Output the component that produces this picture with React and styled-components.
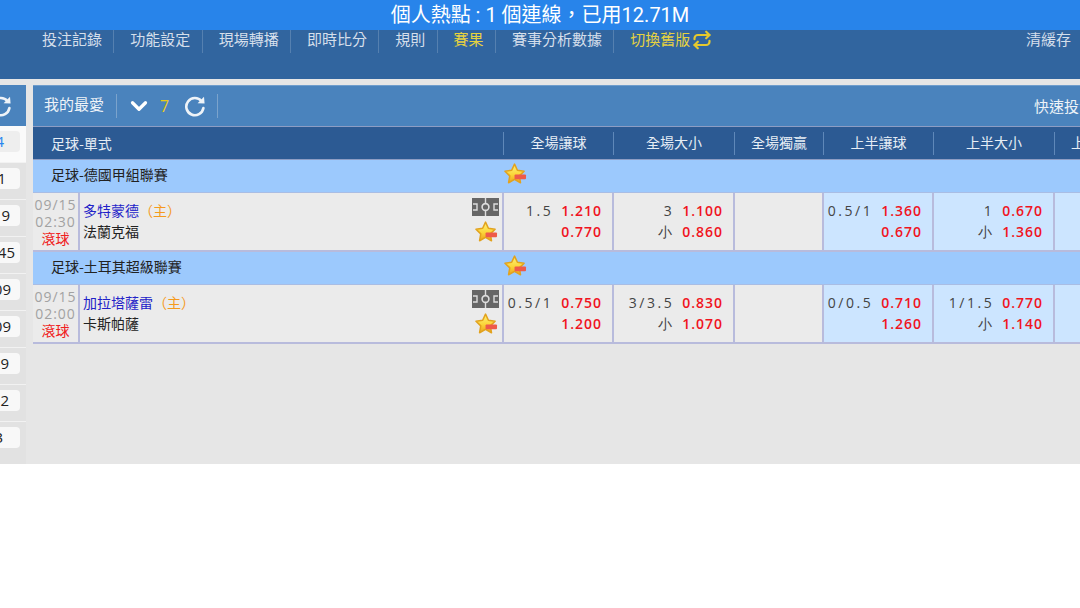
import React from "react"
import styled, { createGlobalStyle } from "styled-components"
import { ChevronDown, Repeat } from "lucide-react"

const GlobalStyle = createGlobalStyle`
  body {
    margin: 0;
    background: #fff;
    font-family: "Noto Sans CJK TC", "Noto Sans", sans-serif;
  }
`

const COLUMNS = "46px 424px 110px 121px 89px 110px 121px 89px"

const Page = styled.div`
  width: 1080px;
  height: 464px;
  overflow: hidden;
  background: #e6e6e6;
`

const HotspotBar = styled.div`
  height: 30px;
  background: #2884ea;
  color: #fff;
  font-family: Roboto, "Noto Sans CJK TC", sans-serif;
  font-size: 20px;
  line-height: 30px;
  text-align: center;
`

const Nav = styled.div`
  height: 49px;
  display: flex;
  align-items: flex-start;
  padding-left: 26px;
  background: #31659f;
  white-space: nowrap;
`

const NavItem = styled.div`
  height: 23px;
  padding: 0 11.3px 0 16px;
  font-size: 15px;
  line-height: 18px;
  color: ${(p) => (p.$active ? "#e6d23f" : "#d5dfeb")};
  border-right: ${(p) => (p.$last ? "none" : "1px solid #5580b0")};
  display: flex;
  gap: 2px;
`

const NavRight = styled.div`
  margin-left: auto;
  display: flex;
  align-items: center;
  gap: 13px;
  margin-right: -15px;
  font-size: 15px;
  line-height: 18px;
  color: #d5dfeb;
`

const NavDot = styled.span`
  width: 11px;
  height: 11px;
  border-radius: 50%;
  background: #8fa9c8;
`

const Content = styled.div`
  display: flex;
  gap: 7px;
  margin-top: 6px;
  height: 379px;
`

const Side = styled.div`
  width: 26px;
  flex: none;
  background: #e2e2e2;
`

const SideHead = styled.div`
  height: 41px;
  background: #4a83bd;
  display: flex;
  align-items: center;
  svg {
    margin-left: -10px;
    flex: none;
  }
`

const SideTop = styled.div`
  height: 36px;
  background: #fafafa;
  padding-top: 5px;
  box-sizing: border-box;
`

const SideRow = styled.div`
  height: 37px;
  box-sizing: border-box;
  padding-top: 5px;
  border-top: 1px solid #f2f2f2;
`

const Chip = styled.div`
  width: 20px;
  height: 21px;
  box-sizing: border-box;
  display: flex;
  justify-content: flex-end;
  padding-right: ${(p) => p.$inset}px;
  background: ${(p) => (p.$first ? "#eeeeee" : "#f8f8f8")};
  border-radius: 0 4px 4px 0;
  color: ${(p) => (p.$first ? "#2a86f0" : "#222")};
  font-family: "Open Sans", sans-serif;
  font-size: 15px;
  line-height: 21px;
  white-space: nowrap;
  overflow: hidden;
`

const Main = styled.div`
  width: 1047px;
  flex: none;
`

const Toolbar = styled.div`
  height: 41px;
  box-sizing: border-box;
  border-top: 1px solid #6f9dcc;
  background: #4a83bd;
  display: flex;
  align-items: center;
  color: #eef3f8;
  font-size: 15px;
`

const ToolTitle = styled.div`
  padding: 0 12px 0 11px;
  height: 24px;
  line-height: 20px;
  border-right: 1px solid #7ba3cc;
`

const ToolChevron = styled(ChevronDown)`
  margin-left: 9px;
`

const ToolCount = styled.div`
  width: 32px;
  padding-left: 8px;
  box-sizing: border-box;
  color: #e8cb1c;
  font-family: "Open Sans", sans-serif;
  font-size: 16px;
  line-height: 20px;
`

const ToolDivider = styled.div`
  width: 1px;
  height: 24px;
  margin-left: 11px;
  background: #7ba3cc;
`

const ToolRight = styled.div`
  margin-left: auto;
  flex: none;
  width: 46px;
  line-height: 20px;
  white-space: nowrap;
`

const TableGrid = styled.div`
  display: grid;
  grid-template-columns: ${COLUMNS};
`

const HeaderRow = styled(TableGrid)`
  height: 34px;
  align-items: center;
  background: #2c5a93;
  border-top: 1px solid #8d9dc4;
  border-bottom: 1px solid #8d9dc4;
  box-sizing: border-box;
  color: #e6edf5;
  font-size: 14px;
`

const HeaderTitle = styled.div`
  grid-column: span 2;
  padding-left: 18px;
  line-height: 20px;
`

const HeaderCell = styled.div`
  height: 23px;
  line-height: 20px;
  text-align: center;
  border-left: 1px solid #5f88b9;
  white-space: nowrap;
`

const LeagueRow = styled(TableGrid)`
  height: 33px;
  box-sizing: border-box;
  align-items: center;
  padding-bottom: 4px;
  background: #9cc9fd;
  border-bottom: 1px solid #a9bde4;
  color: #222;
  font-size: 14px;
`

const LeagueName = styled.div`
  grid-column: span 2;
  padding-left: 18px;
`

const LeagueStar = styled.div`
  margin-left: 1px;
  height: 22px;
`

const MatchRow = styled(TableGrid)`
  height: 59px;
  box-sizing: border-box;
  border-bottom: 2px solid #b8bbdc;
  border-left: 1px solid #b8bbdc;
`

const TimeCell = styled.div`
  background: #ebebeb;
  border-right: 2px solid #b8bbdc;
  margin-left: -1px;
  color: #a2a2a2;
  font-family: "Open Sans", sans-serif;
  font-size: 14px;
  line-height: 16.5px;
  letter-spacing: 1px;
  text-align: center;
  padding-top: 4px;
`

const LiveTag = styled.div`
  color: #f02020;
  letter-spacing: 0;
  font-family: "Noto Sans CJK TC", sans-serif;
`

const TeamCell = styled.div`
  background: #ebebeb;
  border-right: 2px solid #b8bbdc;
  padding: 5px 3px 0 3px;
  display: flex;
  justify-content: space-between;
  font-size: 14px;
  line-height: 21px;
  color: #222;
`

const TeamNames = styled.div`
  padding-top: 2px;
`

const HomeTeam = styled.span`
  color: #2222c8;
`

const HomeMark = styled.span`
  color: #f59a1c;
`

const TeamIcons = styled.div`
  display: flex;
  flex-direction: column;
  align-items: flex-end;
  gap: 5px;
  svg:last-child {
    margin-right: 1px;
  }
`

const OddsCell = styled.div`
  background: ${(p) => (p.$half ? "#cce5ff" : "#ebebeb")};
  border-right: 2px solid #b8bbdc;
  padding: 7px 10px 0 0;
`

const OddsLine = styled.div`
  height: 21px;
  display: flex;
  justify-content: flex-end;
  gap: 8px;
  font-family: "Open Sans", sans-serif;
  font-size: 14px;
  line-height: 21px;
  color: #444;
`

const OddsLabel = styled.span`
  letter-spacing: 2.5px;
`

const OddsValue = styled.span`
  color: #f0141e;
  font-weight: 600;
  letter-spacing: 1px;
`

const RefreshIcon = ({ size = 22 }) => (
  <svg width={size} height={size} viewBox="0 0 22 22" fill="none">
    <path d="M17.6 6.2A8.6 8.6 0 1 0 19.4 13" stroke="#eef3f8" strokeWidth="2.6" strokeLinecap="round" />
    <path d="M13.6 8.2 L20.6 8.6 L20 1.8 Z" fill="#eef3f8" />
  </svg>
)

const StarIcon = ({ id }) => (
  <svg width="23" height="22" viewBox="0 0 24 23">
    <defs>
      <linearGradient id={id} x1="0" y1="0" x2="0" y2="1">
        <stop offset="0" stopColor="#fff27a" />
        <stop offset="0.55" stopColor="#fbd63a" />
        <stop offset="1" stopColor="#eda11c" />
      </linearGradient>
    </defs>
    <path
      d="M11 1.2 L14 7.6 L21 8.6 L16 13.5 L17.2 20.6 L11 17.2 L4.8 20.6 L6 13.5 L1 8.6 L8 7.6 Z"
      fill={`url(#${id})`}
      stroke="#e2a21e"
      strokeWidth="1.6"
      strokeLinejoin="round"
    />
    <rect x="11" y="12" width="12" height="5" rx="1" fill="#ee5a4a" />
  </svg>
)

const PitchIcon = () => (
  <svg width="27" height="18" viewBox="0 0 27 18">
    <rect width="27" height="18" fill="#666" />
    <path d="M1 6 H5 V12 H1 M26 6 H22 V12 H26" fill="none" stroke="#ddd" strokeWidth="1.4" />
    <path d="M13.5 0 V6 M13.5 12 V18" stroke="#ddd" strokeWidth="1.4" />
    <circle cx="13.5" cy="9" r="3.4" fill="none" stroke="#ddd" strokeWidth="1.6" />
  </svg>
)

const sideChips = [
  { text: "1", inset: 14 },
  { text: "9", inset: 10 },
  { text: "45", inset: 5 },
  { text: "09", inset: 9 },
  { text: "09", inset: 9 },
  { text: "9", inset: 11 },
  { text: "2", inset: 11 },
  { text: "3", inset: 17 },
]

const navItems = ["投注記錄", "功能設定", "現場轉播", "即時比分", "規則"]

const headers = ["全場讓球", "全場大小", "全場獨贏", "上半讓球", "上半大小", "上半獨贏"]

const leagues = [
  {
    name: "足球-德國甲組聯賽",
    date: "09/15",
    time: "02:30",
    home: "多特蒙德",
    away: "法蘭克福",
    odds: [
      [["1.5", "1.210"], ["", "0.770"]],
      [["3", "1.100"], ["小", "0.860"]],
      null,
      [["0.5/1", "1.360"], ["", "0.670"]],
      [["1", "0.670"], ["小", "1.360"]],
      null,
    ],
  },
  {
    name: "足球-土耳其超級聯賽",
    date: "09/15",
    time: "02:00",
    home: "加拉塔薩雷",
    away: "卡斯帕薩",
    odds: [
      [["0.5/1", "0.750"], ["", "1.200"]],
      [["3/3.5", "0.830"], ["小", "1.070"]],
      null,
      [["0/0.5", "0.710"], ["", "1.260"]],
      [["1/1.5", "0.770"], ["小", "1.140"]],
      null,
    ],
  },
]

const App = () => (
  <>
    <GlobalStyle />
    <Page>
      <HotspotBar>個人熱點 : 1 個連線，已用12.71M</HotspotBar>
      <Nav>
        {navItems.map((item) => (
          <NavItem key={item}>{item}</NavItem>
        ))}
        <NavItem $active>賽果</NavItem>
        <NavItem>賽事分析數據</NavItem>
        <NavItem $active $last>
          切換舊版
          <Repeat size={20} strokeWidth={2.6} color="#e6c92d" />
        </NavItem>
        <NavRight>
          清緩存
          <NavDot />
        </NavRight>
      </Nav>
      <Content>
        <Side>
          <SideHead>
            <RefreshIcon />
          </SideHead>
          <SideTop>
            <Chip $first $inset={16}>4</Chip>
          </SideTop>
          {sideChips.map((chip, i) => (
            <SideRow key={i}>
              <Chip $inset={chip.inset}>{chip.text}</Chip>
            </SideRow>
          ))}
        </Side>
        <Main>
          <Toolbar>
            <ToolTitle>我的最愛</ToolTitle>
            <ToolChevron size={26} strokeWidth={3} color="#fff" />
            <ToolCount>7</ToolCount>
            <RefreshIcon />
            <ToolDivider />
            <ToolRight>快速投注</ToolRight>
          </Toolbar>
          <HeaderRow>
            <HeaderTitle>足球-單式</HeaderTitle>
            {headers.map((h) => (
              <HeaderCell key={h}>{h}</HeaderCell>
            ))}
          </HeaderRow>
          {leagues.map((league, i) => (
            <React.Fragment key={league.name}>
              <LeagueRow>
                <LeagueName>{league.name}</LeagueName>
                <LeagueStar>
                  <StarIcon id={`league-star-${i}`} />
                </LeagueStar>
              </LeagueRow>
              <MatchRow>
                <TimeCell>
                  {league.date}
                  <br />
                  {league.time}
                  <LiveTag>滾球</LiveTag>
                </TimeCell>
                <TeamCell>
                  <TeamNames>
                    <div>
                      <HomeTeam>{league.home}</HomeTeam>
                      <HomeMark>（主）</HomeMark>
                    </div>
                    <div>{league.away}</div>
                  </TeamNames>
                  <TeamIcons>
                    <PitchIcon />
                    <StarIcon id={`match-star-${i}`} />
                  </TeamIcons>
                </TeamCell>
                {league.odds.map((cell, c) => (
                  <OddsCell key={c} $half={c > 2}>
                    {cell &&
                      cell.map(([label, value], l) => (
                        <OddsLine key={l}>
                          <OddsLabel>{label}</OddsLabel>
                          <OddsValue>{value}</OddsValue>
                        </OddsLine>
                      ))}
                  </OddsCell>
                ))}
              </MatchRow>
            </React.Fragment>
          ))}
        </Main>
      </Content>
    </Page>
  </>
)

export default App
